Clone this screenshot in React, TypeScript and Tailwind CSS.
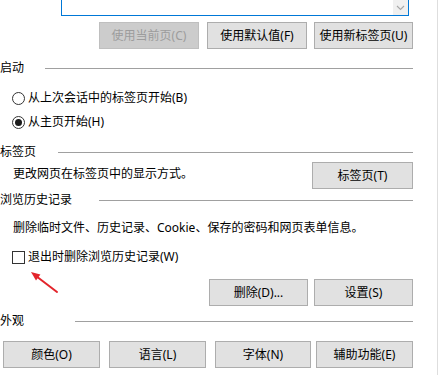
import type { ReactNode } from "react";

function WinButton({
  children,
  width,
  disabled = false,
  className = "",
}: {
  children: ReactNode;
  width: string;
  disabled?: boolean;
  className?: string;
}) {
  return (
    <div
      className={`${width} ${className} flex h-[27px] shrink-0 items-center justify-center border text-[12px] leading-[16px] ${
        disabled
          ? "border-[#bfbfbf] bg-[#cccccc] text-[#9c9c9c]"
          : "border-[#adadad] bg-[#e1e1e1] text-black"
      }`}
    >
      {children}
    </div>
  );
}

function GroupHeader({ label, lineStart, className = "" }: { label: string; lineStart: string; className?: string }) {
  return (
    <div className={`flex h-[16px] items-center ${className}`}>
      <span className={`${lineStart} shrink-0 whitespace-nowrap text-[12px] leading-[16px]`}>{label}</span>
      <div className="h-px flex-1 bg-[#a0a0a0]" />
    </div>
  );
}

function Radio({ checked, label, className = "" }: { checked?: boolean; label: string; className?: string }) {
  return (
    <div className={`flex h-[16px] items-center pl-[12px] ${className}`}>
      <span className="flex h-[13px] w-[13px] items-center justify-center rounded-full border border-[#333333] bg-white">
        {checked && <span className="h-[7px] w-[7px] rounded-full bg-[#1a1a1a]" />}
      </span>
      <span className="ml-[3px] text-[12px] leading-[16px]">{label}</span>
    </div>
  );
}

export default function App() {
  return (
    <div className="relative flex h-[375px] w-[440px] overflow-hidden bg-white font-['Noto_Sans','Noto_Sans_CJK_SC',sans-serif] text-black">
      <div className="w-[437px] shrink-0">
        <div className="w-[413px]">
          {/* home page box (scrolled) */}
          <div className="h-[16px] pl-[61px]">
            <div className="flex h-full w-[348px] justify-end border-x border-b border-[#0078d7]">
              <div className="flex h-[15px] w-[15px] items-center justify-center bg-[#f0f0f0]">
                <svg width="9" height="6" viewBox="0 0 9 6" fill="none">
                  <path d="M1 1l3.5 3.5L8 1" stroke="#a6a6a6" strokeWidth="1.1" />
                </svg>
              </div>
            </div>
          </div>

          <div className="mt-[6px] flex justify-end">
            <WinButton width="w-[100px]" disabled>
              使用当前页(C)
            </WinButton>
            <WinButton width="w-[100px]" className="ml-[8px]">
              使用默认值(F)
            </WinButton>
            <WinButton width="w-[99px]" className="ml-[7px]">
              使用新标签页(U)
            </WinButton>
          </div>

          <GroupHeader label="启动" lineStart="w-[45px]" className="mt-[11px]" />
          <Radio label="从上次会话中的标签页开始(B)" className="mt-[14px]" />
          <Radio checked label="从主页开始(H)" className="mt-[8px]" />

          <GroupHeader label="标签页" lineStart="w-[58px]" className="mt-[14px]" />
          <div className="mt-[2px] flex h-[27px] items-center">
            <span className="pb-[3px] pl-[13px] text-[12px] leading-[16px]">更改网页在标签页中的显示方式。</span>
            <WinButton width="w-[101px]" className="ml-auto">
              标签页(T)
            </WinButton>
          </div>

          <GroupHeader label="浏览历史记录" lineStart="w-[99px]" className="mt-[3px]" />
          <div className="mt-[12px] flex h-[16px] items-center pl-[13px] text-[12px] leading-[16px]">
            删除临时文件、历史记录、Cookie、保存的密码和网页表单信息。
          </div>
          <div className="mt-[13px] flex h-[16px] items-center pl-[12px]">
            <span className="h-[13px] w-[13px] border border-[#333333] bg-white" />
            <span className="ml-[3px] text-[12px] leading-[16px]">退出时删除浏览历史记录(W)</span>
          </div>
          <div className="mt-[14px] flex justify-end">
            <WinButton width="w-[99px]">删除(D)...</WinButton>
            <WinButton width="w-[99px]" className="ml-[6px]">
              设置(S)
            </WinButton>
          </div>

          <GroupHeader label="外观" lineStart="w-[75px]" className="mt-[7px]" />
          <div className="mt-[12px] flex pl-[3px]">
            <WinButton width="w-[97px]">颜色(O)</WinButton>
            <WinButton width="w-[97px]" className="ml-[9px]">
              语言(L)
            </WinButton>
            <WinButton width="w-[96px]" className="ml-[9px]">
              字体(N)
            </WinButton>
            <WinButton width="w-[97px]" className="ml-[5px]">
              辅助功能(E)
            </WinButton>
          </div>
        </div>
      </div>
      <div className="h-full w-px bg-[#dedede]" />

      {/* red annotation arrow */}
      <svg
        className="pointer-events-none absolute left-[28px] top-[268px]"
        width="32"
        height="28"
        viewBox="0 0 32 28"
      >
        <line x1="29" y1="24" x2="8" y2="8" stroke="#e3242b" strokeWidth="2" strokeLinecap="round" />
        <polygon points="3,4 8,12.5 12.4,6.6" fill="#e3242b" />
      </svg>
    </div>
  );
}
